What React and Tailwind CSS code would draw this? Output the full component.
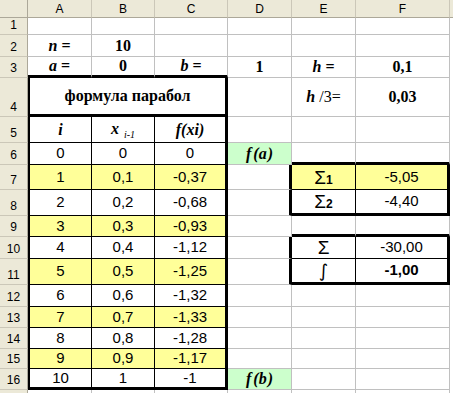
import React from "react";

const R = {
  g: "border-r border-r-[#C0C0C0]",
  k: "border-r border-r-black",
  k3: "border-r-[3px] border-r-black",
  n: "",
};
const B = {
  g: "border-b border-b-[#C0C0C0]",
  k: "border-b border-b-black",
  k3: "border-b-[3px] border-b-black",
  n: "",
};
const L = {
  n: "",
  k2: "border-l-2 border-l-black",
};

const SANS = "font-['Liberation_Sans',Arial,sans-serif] text-[15px]";
const SERIF = "font-['Liberation_Serif','Times_New_Roman',serif] text-[16px] font-bold";

function Cell({ r = "g", b = "g", l = "n", className = "", children }) {
  return (
    <div
      className={`flex items-center justify-center overflow-hidden whitespace-nowrap text-black ${R[r]} ${B[b]} ${L[l]} ${className}`}
    >
      {children}
    </div>
  );
}

function ColHead({ children, last }) {
  return (
    <div
      className={`flex items-center justify-center bg-[#ECE9D8] font-['Liberation_Sans',Arial,sans-serif] text-[12px] text-black ${
        last ? "" : "border-r border-r-[#CBC7B8]"
      } border-b border-b-[#ACA899]`}
    >
      {children}
    </div>
  );
}

function RowHead({ children }) {
  return (
    <div className="flex items-end justify-center pb-[2px] bg-[#ECE9D8] border-r border-r-[#ACA899] border-b border-b-[#CBC7B8] font-['Liberation_Sans',Arial,sans-serif] text-[12px] text-black leading-[14px]">
      {children}
    </div>
  );
}

const Y = "bg-[#FFFF99]";
const G = "bg-[#CCFFCC]";

const data = [
  ["0", "0", "0"],
  ["1", "0,1", "-0,37"],
  ["2", "0,2", "-0,68"],
  ["3", "0,3", "-0,93"],
  ["4", "0,4", "-1,12"],
  ["5", "0,5", "-1,25"],
  ["6", "0,6", "-1,32"],
  ["7", "0,7", "-1,33"],
  ["8", "0,8", "-1,28"],
  ["9", "0,9", "-1,17"],
  ["10", "1", "-1"],
];

function Sigma({ sub }) {
  return (
    <span className="font-['Liberation_Sans',Arial,sans-serif] text-[19px] leading-none text-black">
      Σ{sub && <span className="text-[12px] font-bold">{sub}</span>}
    </span>
  );
}

function FOf({ v }) {
  return (
    <span className={`${SERIF} italic`}>
      f<span className="ml-[2px]">(</span>
      {v}
      <span className="ml-[1px]">)</span>
    </span>
  );
}

export default function App() {
  const rows = [];
  data.forEach((d, idx) => {
    const rowNum = idx + 6;
    const yellow = rowNum % 2 === 1;
    const bg = yellow ? Y : "";
    const lastRow = rowNum === 16;
    const bb = lastRow ? "k3" : "k";
    let dContent = null;
    let dClass = "";
    let dR = "g";
    if (rowNum === 6) {
      dContent = <FOf v="a" />;
      dClass = G;
    }
    if (rowNum === 16) {
      dContent = <FOf v="b" />;
      dClass = G;
    }
    if ([7, 8, 10, 11].includes(rowNum)) dR = "k3";
    let e = { r: "g", b: "g", c: null, cls: "" };
    let f = { r: "g", b: "g", c: null, cls: "" };
    if (rowNum === 6 || rowNum === 9) {
      e.b = "k3";
      f.b = "k3";
    }
    if (rowNum === 7) {
      e = { r: "k", b: "k", c: <Sigma sub="1" />, cls: Y };
      f = { r: "k3", b: "k", c: <span className={SANS}>-5,05</span>, cls: Y };
    }
    if (rowNum === 8) {
      e = { r: "k", b: "k3", c: <Sigma sub="2" />, cls: "" };
      f = { r: "k3", b: "k3", c: <span className={SANS}>-4,40</span>, cls: "" };
    }
    if (rowNum === 10) {
      e = { r: "k", b: "k", c: <Sigma />, cls: "" };
      f = { r: "k3", b: "k", c: <span className={SANS}>-30,00</span>, cls: "" };
    }
    if (rowNum === 11) {
      e = {
        r: "k",
        b: "k3",
        c: (
          <span className="font-['DejaVu_Sans',sans-serif] text-[18px] leading-none">∫</span>
        ),
        cls: "",
      };
      f = {
        r: "k3",
        b: "k3",
        c: <span className={`${SANS} font-bold`}>-1,00</span>,
        cls: "",
      };
    }
    rows.push(
      <React.Fragment key={rowNum}>
        <RowHead>{rowNum}</RowHead>
        <Cell l="k2" r="k" b={bb} className={bg}>
          <span className={SANS}>{d[0]}</span>
        </Cell>
        <Cell r="k" b={bb} className={bg}>
          <span className={SANS}>{d[1]}</span>
        </Cell>
        <Cell r="k3" b={bb} className={bg}>
          <span className={SANS}>{d[2]}</span>
        </Cell>
        <Cell r={dR} className={dClass}>
          {dContent}
        </Cell>
        <Cell r={e.r} b={e.b} className={e.cls}>
          {e.c}
        </Cell>
        <Cell r={f.r} b={f.b} className={f.cls}>
          {f.c}
        </Cell>
        <Cell r="n" b="n" />
      </React.Fragment>
    );
  });

  return (
    <div className="w-[453px] h-[393px] overflow-hidden bg-white">
      <div className="grid grid-cols-[28px_64px_63px_73px_64px_64px_94px_20px] grid-rows-[18px_17px_22px_21px_39px_26px_22px_25px_26px_21px_22px_26px_22px_21px_21px_20px_21px_20px]">
        <div className="bg-[#ECE9D8] border-r border-r-[#ACA899] border-b border-b-[#ACA899]" />
        {["A", "B", "C", "D", "E", "F"].map((c) => (
          <ColHead key={c}>{c}</ColHead>
        ))}
        <ColHead last />

        <RowHead>1</RowHead>
        <Cell />
        <Cell />
        <Cell />
        <Cell />
        <Cell />
        <Cell />
        <Cell r="n" b="n" />

        <RowHead>2</RowHead>
        <Cell>
          <span className={SERIF}>
            <i>n</i> =
          </span>
        </Cell>
        <Cell>
          <span className={SERIF}>10</span>
        </Cell>
        <Cell />
        <Cell />
        <Cell />
        <Cell />
        <Cell r="n" b="n" />

        <RowHead>3</RowHead>
        <Cell b="k3">
          <span className={SERIF}>
            <i>a</i> =
          </span>
        </Cell>
        <Cell b="k3">
          <span className={SERIF}>0</span>
        </Cell>
        <Cell b="k3">
          <span className={SERIF}>
            <i>b</i> =
          </span>
        </Cell>
        <Cell>
          <span className={SERIF}>1</span>
        </Cell>
        <Cell>
          <span className={SERIF}>
            <i>h</i> =
          </span>
        </Cell>
        <Cell>
          <span className={SERIF}>0,1</span>
        </Cell>
        <Cell r="n" b="n" />

        <RowHead>4</RowHead>
        <div className="col-span-3 flex items-center justify-center border-l-2 border-l-black border-r-[3px] border-r-black border-b-[3px] border-b-black">
          <span className={SERIF}>формула парабол</span>
        </div>
        <Cell />
        <Cell>
          <span className="font-['Liberation_Serif','Times_New_Roman',serif] text-[16px]">
            <i className="font-bold">h</i> /3=
          </span>
        </Cell>
        <Cell>
          <span className={SERIF}>0,03</span>
        </Cell>
        <Cell r="n" b="n" />

        <RowHead>5</RowHead>
        <Cell l="k2" r="k" b="k">
          <span className={`${SERIF} italic`}>i</span>
        </Cell>
        <Cell r="k" b="k">
          <span className={`${SERIF} italic`}>
            x
            <span className="ml-[5px] align-sub text-[10px] font-normal">i-1</span>
          </span>
        </Cell>
        <Cell r="k3" b="k">
          <span className={`${SERIF} italic`}>f(xi)</span>
        </Cell>
        <Cell />
        <Cell />
        <Cell />
        <Cell r="n" b="n" />

        {rows}

        <RowHead />
        <Cell />
        <Cell />
        <Cell />
        <Cell />
        <Cell />
        <Cell />
        <Cell r="n" b="n" />
      </div>
    </div>
  );
}
